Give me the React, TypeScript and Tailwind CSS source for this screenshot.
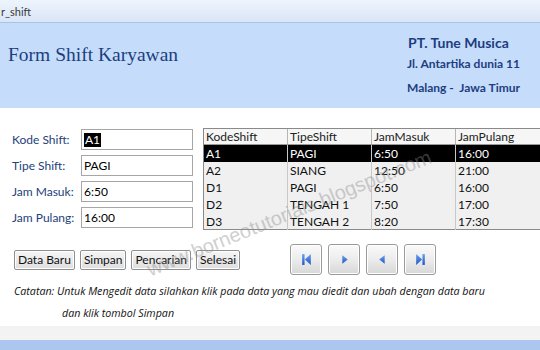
import React from "react";

const rows = [
  ["A1", "PAGI", "6:50", "16:00"],
  ["A2", "SIANG", "12:50", "21:00"],
  ["D1", "PAGI", "6:50", "16:00"],
  ["D2", "TENGAH 1", "7:50", "17:00"],
  ["D3", "TENGAH 2", "8:20", "17:30"],
];

const fields: [string, string, boolean][] = [
  ["Kode Shift:", "A1", true],
  ["Tipe Shift:", "PAGI", false],
  ["Jam Masuk:", "6:50", false],
  ["Jam Pulang:", "16:00", false],
];

function NavIcon({ kind }: { kind: "first" | "next" | "prev" | "last" }) {
  return (
    <svg width="11" height="13" viewBox="0 0 10 12">
      <defs>
        <linearGradient id={"g" + kind} x1="0" y1="0" x2="0" y2="1">
          <stop offset="0" stopColor="#6aa0f0" />
          <stop offset="1" stopColor="#1f55c8" />
        </linearGradient>
      </defs>
      {kind === "first" && (
        <>
          <rect x="1" y="1" width="2.2" height="10" fill={`url(#g${kind})`} />
          <polygon points="9,1 9,11 3.5,6" fill={`url(#g${kind})`} />
        </>
      )}
      {kind === "next" && <polygon points="3,2 3,10 8,6" fill={`url(#g${kind})`} />}
      {kind === "prev" && <polygon points="7,2 7,10 2,6" fill={`url(#g${kind})`} />}
      {kind === "last" && (
        <>
          <polygon points="1,1 1,11 6.5,6" fill={`url(#g${kind})`} />
          <rect x="6.8" y="1" width="2.2" height="10" fill={`url(#g${kind})`} />
        </>
      )}
    </svg>
  );
}

export default function App() {
  const body = { fontFamily: "Lato, 'Open Sans', sans-serif" };
  return (
    <div className="relative w-[540px] h-[350px] overflow-hidden bg-white flex flex-col" style={body}>
      {/* title bar */}
      <div className="h-[23px] shrink-0 bg-gradient-to-b from-[#eef4fc] to-[#d9e6f7] border-b border-[#a9c3e6] flex items-center">
        <span className="ml-[1px] text-[11px] text-[#3a3a3a] leading-none">r_shift</span>
      </div>

      {/* header */}
      <div className="h-[85px] shrink-0 bg-[#c5dcfb] flex justify-between">
        <div
          className="pl-[8px] pt-[22px] text-[19.5px] text-[#1b3f80] leading-none"
          style={{ fontFamily: "'Liberation Serif', serif" }}
        >
          Form Shift Karyawan
        </div>
        <div className="w-[133px] pt-[11px] flex flex-col text-[#1d3e80] font-bold">
          <div className="pl-[1px] text-[14px] leading-[17px]">PT. Tune Musica</div>
          <div className="mt-[5px] text-[12px] leading-[15px]">Jl. Antartika dunia 11</div>
          <div className="mt-[9px] text-[12px] leading-[15px]">Malang -&nbsp; Jawa Timur</div>
        </div>
      </div>

      {/* body */}
      <div className="flex-1 flex flex-col pt-[20px]">
        <div className="flex">
          <div className="w-[203px] shrink-0 flex flex-col gap-[5px] pl-[12px] pt-[1px]">
            {fields.map(([label, val, sel]) => (
              <div key={label} className="flex items-center h-[21px]">
                <div className="w-[69px] text-[12px] text-[#24417a]">{label}</div>
                <div className="w-[112px] h-[21px] border border-[#a6a6a6] flex items-center pl-[2px] text-[12px] text-black">
                  {sel ? <span className="bg-black text-white px-[1px] leading-[14px]">{val}</span> : val}
                </div>
              </div>
            ))}
          </div>

          <div className="flex-1 h-[102px] border border-[#8a8a8a] border-r-0 bg-[#f0f0f0] text-[12px]">
            <div className="flex h-[16px] items-center border-b border-[#9a9a9a] bg-[#f6f6f6] text-[#222]">
              {["KodeShift", "TipeShift", "JamMasuk", "JamPulang"].map((h, i) => (
                <div
                  key={h}
                  className={`h-full flex items-center pl-[2px] ${i < 3 ? "w-[84px] border-r border-[#b5b5b5]" : "flex-1"}`}
                >
                  {h}
                </div>
              ))}
            </div>
            {rows.map((r, ri) => (
              <div
                key={ri}
                className={`flex h-[17px] items-center ${ri === 0 ? "bg-black text-white" : "text-[#111]"}`}
              >
                {r.map((c, i) => (
                  <div
                    key={i}
                    className={`h-full flex items-center pl-[2px] ${i < 3 ? "w-[84px] border-r border-[#c8c8c8]" : "flex-1"}`}
                  >
                    {c}
                  </div>
                ))}
              </div>
            ))}
          </div>
        </div>

        {/* buttons */}
        <div className="flex items-center mt-[14px]">
          <div className="w-[290px] shrink-0 flex gap-[5px] pl-[14px] pt-[1px]">
            {["Data Baru", "Simpan", "Pencarian", "Selesai"].map((b) => (
              <div
                key={b}
                className="h-[20px] px-[3px] flex items-center border border-[#8f8f8f] rounded-[2px] bg-gradient-to-b from-[#f6f6f6] to-[#dedede] text-[12px] text-[#111] shadow-[inset_0_0_0_1px_#ffffff]"
              >
                {b}
              </div>
            ))}
          </div>
          <div className="flex gap-[6px]">
            {(["first", "next", "prev", "last"] as const).map((k) => (
              <div
                key={k}
                className="w-[32px] h-[31px] flex items-center justify-center border border-[#9a9a9a] rounded-[3px] bg-gradient-to-b from-[#fafafa] via-[#ececec] to-[#d7d7d7] shadow-[inset_0_0_0_1px_#ffffff]"
              >
                <NavIcon kind={k} />
              </div>
            ))}
          </div>
        </div>

        <div
          className="mt-[5px] pl-[14px] text-[10.7px] italic text-[#111] leading-[22px]"
          style={{ fontFamily: "'Open Sans', sans-serif" }}
        >
          <div>Catatan: Untuk Mengedit data silahkan klik pada data yang mau diedit dan ubah dengan data baru</div>
          <div className="pl-[48px]">dan klik tombol Simpan</div>
        </div>
      </div>

      <div className="h-[14px] shrink-0 bg-[#f3f3f3]" />
      <div className="h-[10px] shrink-0 bg-[#abc7ef]" />

      {/* watermark */}
      <div
        className="absolute left-[148px] top-[258px] text-[20px] leading-[24px] text-[#8a8a8a] opacity-40 whitespace-nowrap pointer-events-none origin-left"
        style={{ transform: "rotate(-22deg)", fontFamily: "'Liberation Sans', sans-serif" }}
      >
        www.borneotutorials.blogspot.com
      </div>
    </div>
  );
}
